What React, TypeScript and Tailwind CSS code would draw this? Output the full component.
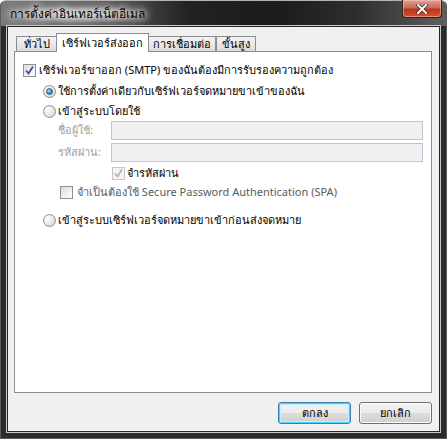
import React from "react";

const font = { fontFamily: 'Tahoma, "Noto Sans", "DejaVu Sans", sans-serif' };

const CheckBox = ({ checked = false, disabled = false }: { checked?: boolean; disabled?: boolean }) => (
  <span
    className={`relative flex h-[13px] w-[13px] shrink-0 items-center justify-center border ${
      disabled ? "border-[#c5c5c5] bg-[#f4f4f4]" : "border-[#8e8f8f] bg-[linear-gradient(135deg,#dcdcdc,#ffffff)]"
    }`}
  >
    {checked && (
      <svg width="11" height="11" viewBox="0 0 11 11">
        <path
          d="M2 5.5 L4.5 8.5 L9 1.5"
          fill="none"
          stroke={disabled ? "#b4b4b4" : "#3d4f8f"}
          strokeWidth="1.8"
        />
      </svg>
    )}
  </span>
);

const Radio = ({ checked = false }: { checked?: boolean }) => (
  <span className="flex h-[13px] w-[13px] shrink-0 items-center justify-center rounded-full border border-[#8e8f8f] bg-[radial-gradient(circle_at_30%_30%,#ffffff,#d2d2d2)]">
    {checked && (
      <span className="h-[7px] w-[7px] rounded-full border border-[#2b5f89] bg-[radial-gradient(circle_at_35%_35%,#aee3ff,#2e86c6_60%,#1b5a8c)]" />
    )}
  </span>
);

const Tab = ({ label, w, active = false }: { label: string; w: string; active?: boolean }) =>
  active ? (
    <div
      className={`relative z-10 -mx-[2px] -mb-px flex h-[19px] items-start justify-center border border-b-0 border-[#898c95] bg-white pt-[1px] ${w}`}
    >
      {label}
    </div>
  ) : (
    <div
      className={`flex h-[15px] items-center justify-center border border-b-0 border-[#898c95] bg-[linear-gradient(#f3f3f3,#e9e9e9_50%,#dadada)] ${w}`}
    >
      {label}
    </div>
  );

const Button = ({ label, focused = false }: { label: string; focused?: boolean }) => (
  <button
    className={`flex h-[22px] w-[73px] items-center justify-center rounded-[3px] border text-[11px] text-black bg-[linear-gradient(#f2f2f2,#ebebeb_50%,#dddddd_50%,#cfcfcf)] ${
      focused
        ? "border-[#3c7fb1] shadow-[inset_0_0_0_1px_#48d1fb,inset_0_0_0_2px_#c8ecfb]"
        : "border-[#707070] shadow-[inset_0_0_0_1px_#fcfcfc]"
    }`}
    style={font}
  >
    {label}
  </button>
);

export default function App() {
  return (
    <div
      className="flex h-[439px] w-[447px] flex-col rounded-t-[6px] border border-[#5c5c5c] border-t-[#b4b4b4] bg-[#2b2b2b] bg-[linear-gradient(to_right,#7a7a7a_0%,#686868_20%,#222222_42%,#1b1b1b_62%,#2e2e2e_80%,#5f5f5f_100%)] bg-[length:100%_25px] bg-no-repeat px-[5px] pb-[5px]"
      style={font}
    >
      {/* title bar */}
      <div className="flex h-[24px] items-start justify-between">
        <span className="mt-[4px] bg-[radial-gradient(closest-side,rgba(235,235,235,0.75),rgba(235,235,235,0))] px-[4px] text-[12px] text-black [text-shadow:0_0_6px_#ffffff,0_0_10px_#ffffff,0_0_12px_#e0e0e0]">
          การตั้งค่าอินเทอร์เน็ตอีเมล
        </span>
        <span className="-mr-[1px] -mt-[1px] flex h-[18px] w-[40px] items-center justify-center rounded-b-[4px] border border-t-0 border-[#3a1e18] bg-[linear-gradient(#e1a497,#c86a58_45%,#b8361f_55%,#d9502f)] shadow-[inset_0_0_0_1px_rgba(255,200,190,0.5)]">
          <svg width="12" height="10" viewBox="0 0 12 10">
            <path d="M2 1 L10 9 M10 1 L2 9" stroke="#3b2a26" strokeWidth="3.4" strokeLinecap="square" />
            <path d="M2 1 L10 9 M10 1 L2 9" stroke="#ffffff" strokeWidth="2" strokeLinecap="square" />
          </svg>
        </span>
      </div>

      {/* client area */}
      <div className="flex-1 border border-[#c9c9c9]">
        <div className="flex h-full flex-col border border-[#262626] bg-[#f0f0f0] pl-[6px] pr-[7px] pt-[6px] text-[11px] text-black">
          {/* tabs */}
          <div className="flex h-[18px] items-end pl-[2px]">
            <Tab label="ทั่วไป" w="w-[42px]" />
            <Tab label="เซิร์ฟเวอร์ส่งออก" w="w-[93px]" active />
            <Tab label="การเชื่อมต่อ" w="w-[69px]" />
            <Tab label="ขั้นสูง" w="w-[40px]" />
          </div>

          {/* tab panel */}
          <div className="flex h-[342px] flex-col border border-[#898c95] bg-white pl-[8px] pt-[11px]">
            <div className="flex h-[14px] items-center gap-[3px]">
              <CheckBox checked />
              <span>เซิร์ฟเวอร์ขาออก (SMTP) ของฉันต้องมีการรับรองความถูกต้อง</span>
            </div>

            <div className="ml-[20px] mt-[6px] flex flex-col">
              <div className="flex h-[16px] items-center gap-[2px]">
                <Radio checked />
                <span>ใช้การตั้งค่าเดียวกับเซิร์ฟเวอร์จดหมายขาเข้าของฉัน</span>
              </div>
              <div className="mt-[4px] flex h-[16px] items-center gap-[2px]">
                <Radio />
                <span>เข้าสู่ระบบโดยใช้</span>
              </div>

              <div className="ml-[15px] mt-[2px] flex flex-col">
                <div className="flex h-[19px] items-center">
                  <span className="w-[53px] text-[#a0a0a0]">ชื่อผู้ใช้:</span>
                  <div className="h-[19px] w-[312px] border border-[#b9c8d6] bg-[#f0f0f0]" />
                </div>
                <div className="mt-[3px] flex h-[19px] items-center">
                  <span className="w-[53px] text-[#a0a0a0]">รหัสผ่าน:</span>
                  <div className="h-[19px] w-[312px] border border-[#b9c8d6] bg-[#f0f0f0]" />
                </div>
                <div className="ml-[54px] mt-[4px] flex h-[14px] items-center gap-[2px]">
                  <CheckBox checked disabled />
                  <span>จำรหัสผ่าน</span>
                </div>
                <div className="ml-[2px] mt-[5px] flex h-[14px] items-center gap-[4px]">
                  <CheckBox />
                  <span className="text-[#5c5c5c]">จำเป็นต้องใช้ Secure Password Authentication (SPA)</span>
                </div>
              </div>

              <div className="mt-[13px] flex h-[16px] items-center gap-[2px]">
                <Radio />
                <span>เข้าสู่ระบบเซิร์ฟเวอร์จดหมายขาเข้าก่อนส่งจดหมาย</span>
              </div>
            </div>
          </div>

          {/* buttons */}
          <div className="mt-[9px] flex justify-end gap-[8px]">
            <Button label="ตกลง" focused />
            <Button label="ยกเลิก" />
          </div>
        </div>
      </div>
    </div>
  );
}
